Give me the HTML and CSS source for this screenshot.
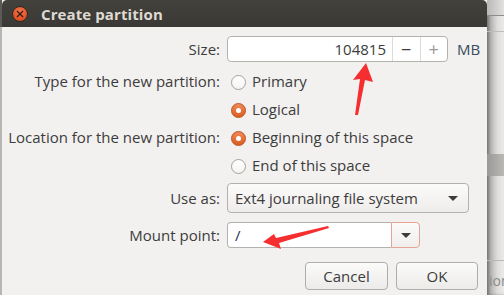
FILE: index.html
```html
<!DOCTYPE html>
<html lang="en">
<head>
    <meta charset="UTF-8">
    <title>Create partition</title>
    <link rel="stylesheet" href="styles.css">
</head>
<body>
    <div class="screen">
        <div class="edge-left"></div>

        <div class="dialog">
            <div class="titlebar">
                <span class="close-btn">
                    <svg width="8" height="8" viewBox="0 0 8 8"><path d="M1 1 L7 7 M7 1 L1 7" stroke="#3a1a10" stroke-width="1.4"/></svg>
                </span>
                <span class="title">Create partition</span>
            </div>

            <div class="content">
                <div class="row row-size">
                    <label class="row-label">Size:</label>
                    <div class="spin">
                        <input class="spin-value" type="text" value="104815">
                        <span class="spin-btn">&minus;</span>
                        <span class="spin-btn disabled">+</span>
                    </div>
                    <span class="unit">MB</span>
                </div>

                <div class="row row-radio first-radio">
                    <label class="row-label">Type for the new partition:</label>
                    <span class="radio"></span><span class="radio-text">Primary</span>
                </div>
                <div class="row row-radio">
                    <label class="row-label"></label>
                    <span class="radio checked"></span><span class="radio-text">Logical</span>
                </div>
                <div class="row row-radio">
                    <label class="row-label">Location for the new partition:</label>
                    <span class="radio checked"></span><span class="radio-text">Beginning of this space</span>
                </div>
                <div class="row row-radio">
                    <label class="row-label"></label>
                    <span class="radio"></span><span class="radio-text">End of this space</span>
                </div>

                <div class="row row-use">
                    <label class="row-label">Use as:</label>
                    <div class="combo">
                        <span>Ext4 journaling file system</span>
                        <span class="caret"></span>
                    </div>
                </div>

                <div class="row row-mount">
                    <label class="row-label">Mount point:</label>
                    <div class="combo-entry">
                        <input class="mount-value" type="text" value="/">
                        <span class="combo-entry-btn"><span class="caret"></span></span>
                    </div>
                </div>

                <div class="actions">
                    <button class="btn btn-cancel">Cancel</button>
                    <button class="btn btn-ok">OK</button>
                </div>
            </div>

            <svg class="marks" width="485" height="295" viewBox="2 0 485 295">
                <polygon points="366,63 373,82 365,80 358,115 355,115 360,79 353,80" fill="#f52f2f"/>
                <polygon points="263,242 274,234 276,238 328,226 329,228 279,243 281,249" fill="#f52f2f"/>
            </svg>
        </div>

        <div class="backdrop">
            <div class="bd-head"></div>
            <div class="bd-bar"></div>
            <div class="bd-list"></div>
            <div class="bd-sel"></div>
            <div class="bd-list bd-rest"></div>
            <div class="bd-foot">ion</div>
        </div>
    </div>
</body>
</html>
```

FILE: styles.css
```css
:root {
    --text: #3c3c3c;
    --bg: #f2f1f0;
    --border: #b4b3af;
    --orange: #e4682f;
    --title-bg: #3c3b37;
}

* {
    margin: 0;
    padding: 0;
    box-sizing: border-box;
}

body {
    width: 504px;
    height: 295px;
    overflow: hidden;
    font-family: 'Open Sans', 'Noto Sans', sans-serif;
    font-size: 15px;
    color: var(--text);
    background: #c8c8c6;
}

.screen {
    display: flex;
    height: 295px;
}

.edge-left {
    width: 2px;
    background: linear-gradient(#5a5a58 0 27px, #b7b6b3 27px);
}

.dialog {
    position: relative;
    width: 485px;
    height: 295px;
    background: var(--bg);
    display: flex;
    flex-direction: column;
}

.titlebar {
    height: 27px;
    background: linear-gradient(#42413c, #3a3935);
    border-radius: 5px 5px 0 0;
    display: flex;
    align-items: center;
    padding-left: 10px;
}

.close-btn {
    width: 16px;
    height: 16px;
    border-radius: 50%;
    background: radial-gradient(circle at 50% 35%, #f27a4f, #e04e22 70%);
    border: 1px solid #2e2c28;
    display: flex;
    align-items: center;
    justify-content: center;
    margin-top: 1px;
}

.title {
    margin-left: 13px;
    color: #dfdbd2;
    font-weight: bold;
    font-size: 15px;
    letter-spacing: 0.1px;
}

.content {
    padding-top: 9px;
    display: flex;
    flex-direction: column;
}

.row {
    display: flex;
    align-items: center;
}

.row-label {
    width: 218px;
    text-align: right;
    margin-right: 7px;
    white-space: nowrap;
}

/* size spinner */
.row-size {
    height: 26px;
}

.spin {
    width: 221px;
    height: 26px;
    display: flex;
    background: #fff;
    border: 1px solid var(--border);
    border-radius: 4px;
}

.spin-value {
    width: 164px;
    border: none;
    outline: none;
    background: transparent;
    font: inherit;
    color: var(--text);
    text-align: right;
    padding-right: 6px;
}

.spin-btn {
    width: 28px;
    border-left: 1px solid #dcdbd8;
    display: flex;
    align-items: center;
    justify-content: center;
    font-size: 18px;
    color: #3c3c3c;
}

.spin-btn.disabled {
    color: #9a9a98;
}

.unit {
    margin-left: 9px;
    color: #3b4a60;
}

/* radios */
.row-radio {
    height: 28px;
}

.first-radio {
    margin-top: 5px;
}

.radio {
    width: 15px;
    height: 15px;
    margin-left: 4px;
    margin-top: 2px;
    border-radius: 50%;
    border: 1px solid #a3a29e;
    background: linear-gradient(#ffffff, #f4f4f3);
    display: flex;
    align-items: center;
    justify-content: center;
}

.radio.checked {
    border-color: #b9501f;
    background: linear-gradient(#f08a58, #dc5c22);
}

.radio.checked::after {
    content: "";
    width: 5px;
    height: 5px;
    border-radius: 50%;
    background: #fff;
}

.radio-text {
    margin-left: 6px;
}

/* combos */
.row-use {
    margin-top: 4px;
    height: 30px;
}

.combo {
    width: 242px;
    height: 30px;
    border: 1px solid #b2b1ad;
    border-radius: 4px;
    background: linear-gradient(#fbfbfa, #eeedeb);
    display: flex;
    align-items: center;
    justify-content: space-between;
    padding: 0 10px 0 7px;
}

.caret {
    width: 0;
    height: 0;
    border-left: 5px solid transparent;
    border-right: 5px solid transparent;
    border-top: 5px solid #3c3c3c;
}

.row-mount {
    margin-top: 9px;
    height: 26px;
}

.combo-entry {
    width: 193px;
    height: 26px;
    display: flex;
}

.mount-value {
    width: 164px;
    border: 1px solid var(--border);
    border-right: none;
    border-radius: 4px 0 0 4px;
    background: #fff;
    outline: none;
    font: inherit;
    color: #1f2f4f;
    padding-left: 7px;
}

.combo-entry-btn {
    width: 29px;
    border: 1px solid #e3a591;
    border-radius: 0 4px 4px 0;
    background: linear-gradient(#fbfbfa, #efeeec);
    display: flex;
    align-items: center;
    justify-content: center;
}

/* buttons */
.actions {
    margin-top: 14px;
    display: flex;
    justify-content: flex-end;
    gap: 8px;
    padding-right: 9px;
}

.btn {
    height: 28px;
    border: 1px solid #aeada9;
    border-radius: 4px;
    background: linear-gradient(#fbfbfa, #ecebe9);
    font: inherit;
    color: var(--text);
}

.btn-cancel {
    width: 83px;
}

.btn-ok {
    width: 82px;
}

.marks {
    position: absolute;
    left: 0;
    top: 0;
    pointer-events: none;
}

/* window behind the dialog */
.backdrop {
    width: 17px;
    display: flex;
    flex-direction: column;
    background: linear-gradient(90deg, #9c9b99, #dedddb 60%, #ecebea);
    box-shadow: inset 2px 0 3px rgba(0, 0, 0, 0.25);
}

.bd-head {
    height: 16px;
    background: linear-gradient(90deg, #b9b8b6, #e2e1df);
    border-bottom: 1px solid #8d8c8a;
}

.bd-bar {
    height: 16px;
    border-bottom: 1px solid #bdbcba;
}

.bd-list {
    height: 122px;
}

.bd-sel {
    height: 22px;
    background: linear-gradient(90deg, #9a9896, #bbb9b6);
}

.bd-rest {
    height: 85px;
    border-bottom: 1px solid #b8b7b5;
}

.bd-foot {
    flex: 1;
    font-size: 14px;
    color: #8a8a88;
    padding-left: 2px;
    padding-top: 10px;
    white-space: nowrap;
    overflow: hidden;
}
```
